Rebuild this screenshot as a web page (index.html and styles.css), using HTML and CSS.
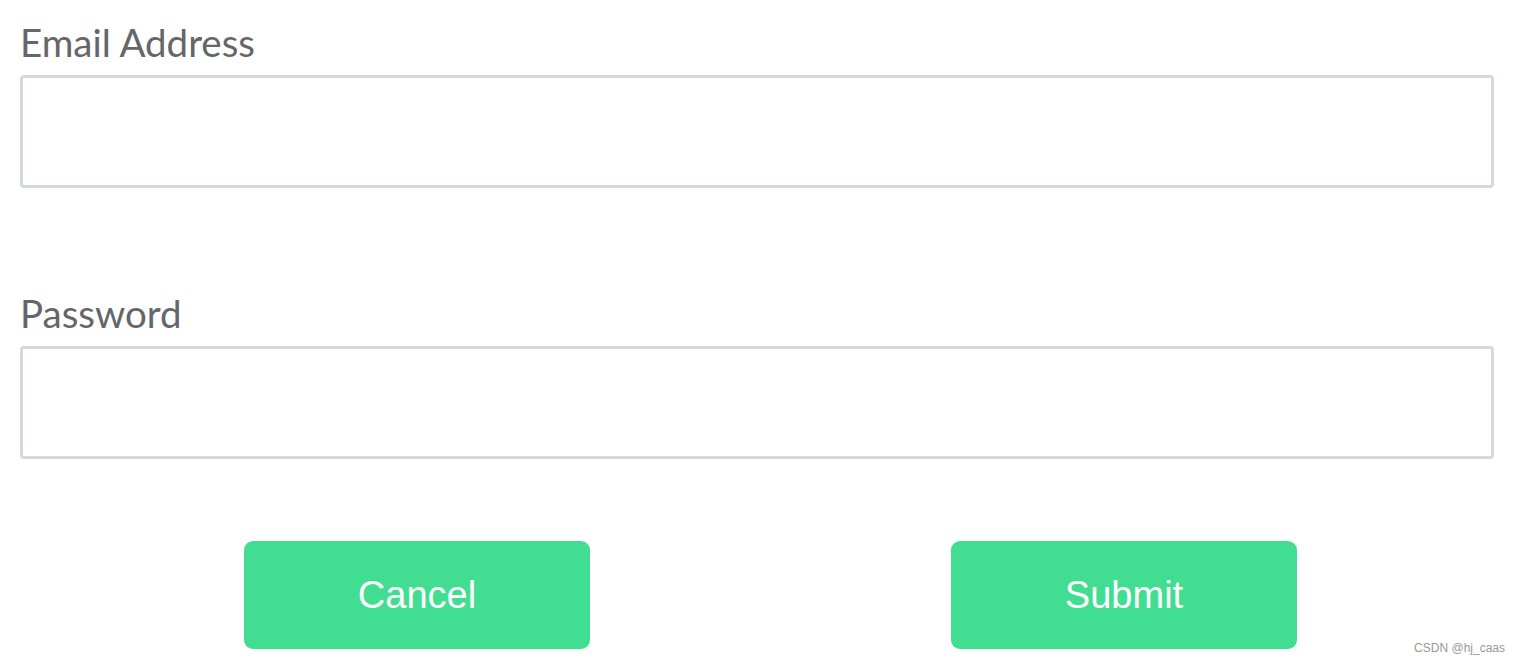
FILE: index.html
```html
<!DOCTYPE html>
<html>
<head>
<meta charset="utf-8">
<link rel="stylesheet" href="styles.css">
</head>
<body>
<form class="form">
  <div class="field field-email">
    <label class="label">Email Address</label>
    <input class="input" type="email">
  </div>
  <div class="field field-password">
    <label class="label">Password</label>
    <input class="input" type="password">
  </div>
  <div class="actions">
    <button type="button" class="btn">Cancel</button>
    <button type="button" class="btn">Submit</button>
  </div>
</form>
<div class="watermark">CSDN @hj_caas</div>
</body>
</html>
```
FILE: styles.css
```css
html, body {
  margin: 0;
  padding: 0;
  background: #ffffff;
}
body {
  width: 1520px;
  height: 664px;
  overflow: hidden;
  position: relative;
}
.form {
  padding: 19px 26px 0 20px;
  display: flex;
  flex-direction: column;
}
.field {
  display: flex;
  flex-direction: column;
}
.field-password {
  margin-top: 102px;
}
.label {
  font-family: Lato, "Open Sans", sans-serif;
  font-size: 38.5px;
  line-height: 46px;
  color: #646669;
  margin-bottom: 10px;
}
.input {
  box-sizing: border-box;
  height: 113px;
  width: 100%;
  border: 3px solid #d3d9de;
  border-radius: 4px;
  background: #fff;
  margin: 0;
  outline: none;
}
.actions {
  display: flex;
  gap: 361px;
  padding-left: 224px;
  margin-top: 82px;
}
.btn {
  width: 346px;
  height: 108px;
  border: none;
  border-radius: 9px;
  background: #41de92;
  color: #ffffff;
  font-family: "Liberation Sans", Arial, sans-serif;
  font-size: 38px;
  padding: 1px 0 0 0;
}
.watermark {
  position: absolute;
  right: 15px;
  bottom: 9px;
  font-family: "Liberation Sans", Arial, sans-serif;
  font-size: 12px;
  color: #999999;
}
```
